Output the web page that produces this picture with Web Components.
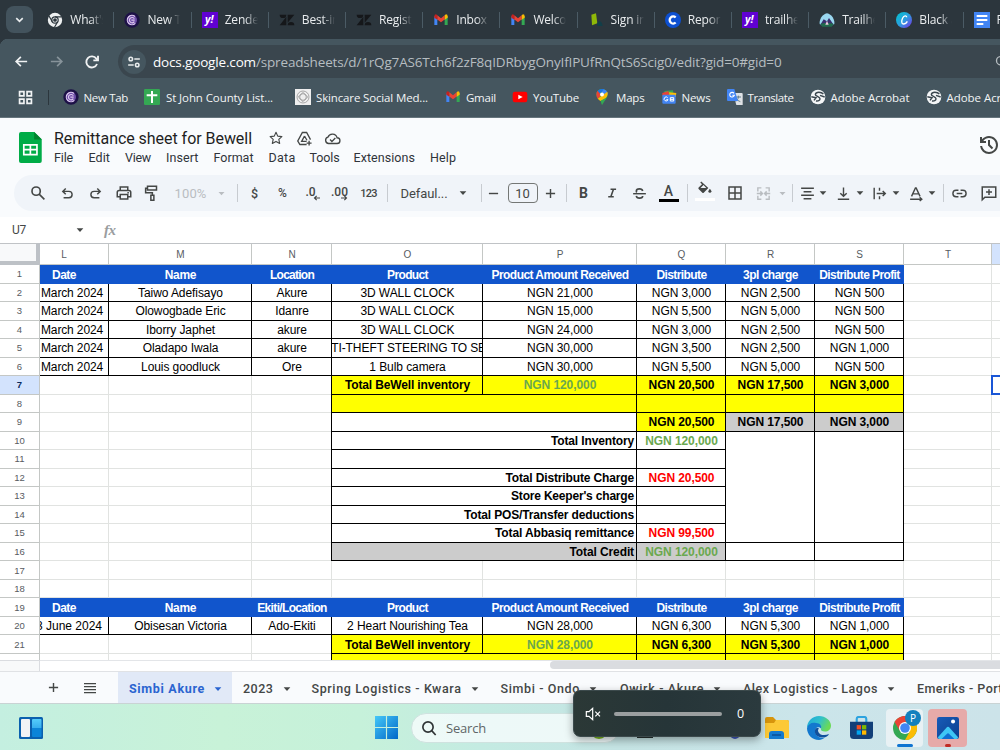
<!DOCTYPE html>
<html lang="en">
<head>
<meta charset="utf-8">
<title>Remittance sheet for Bewell</title>
<style>
    body {
        margin: 0;
        width: 1000px;
        height: 750px;
        overflow: hidden;
        background: #fff;
    }
    desktop-screen {
        font-family: "Open Sans", "Noto Sans", sans-serif;
    }
</style>
</head>
<body>
<desktop-screen>
    <browser-tabs></browser-tabs>
    <address-bar></address-bar>
    <bookmarks-bar></bookmarks-bar>
    <doc-header></doc-header>
    <sheet-toolbar></sheet-toolbar>
    <formula-bar></formula-bar>
    <sheet-grid></sheet-grid>
    <sheet-tabs></sheet-tabs>
    <task-bar></task-bar>
    <volume-flyout slot="overlay"></volume-flyout>
</desktop-screen>

<script>
const line = (body, width = 2) => `<g fill="none" stroke="currentColor" stroke-width="${width}">${body}</g>`;

const C_TAB = `<circle cx="12" cy="12" r="11.5" fill="#1d1147"/><circle cx="12" cy="12" r="7.5" fill="#6f4fa8"/><g fill="none" stroke="#dcc8ee" stroke-width="1.8"><path d="M16.5 6.8A7 7 0 1 0 17 17"/><path d="M15.5 10A4 4 0 1 0 15.5 14.5M11 12.2h5"/></g>`;
const GMAIL = `<path d="M2 6v13.5h4.5V11z" fill="#4285f4"/><path d="M17.5 11v8.500H22V6z" fill="#34a853"/><path d="M2 6.500q0-3 2.500-3L6.500 5v6.500L2 8.500z" fill="#c5221f"/><path d="M6.500 5L12 9.300 17.500 5v6.300L12 15.500 6.500 11.300z" fill="#ea4335"/><path d="M17.500 5l2-1.500Q22 3.500 22 6.500v2l-4.500 3z" fill="#fbbc04"/>`;
const YAHOO = `<path d="M0 0h24v24H0z" fill="#6001d2"/><text x="11" y="16" font-family="Open Sans" font-size="16" font-weight="700" font-style="italic" text-anchor="middle" fill="#fff">y!</text>`;
const ZEN = `<g fill="#15171a"><path d="M1 4h10A5 5 0 0 1 1 4zM11 7v13H1zM13 4h10L13 16zM13 20a5 5 0 0 1 10 0z"/></g>`;
const ACROBAT = `<circle cx="12" cy="12" r="11" fill="#f4f6f7"/><path d="M20 7.500c-3-3.500-11-4-12 .5-.5 3 7 3 7 6.500 0 3-3 4-6 3.500M2 11.500l7 1.500-3 4M15 9.500l7 2.500" fill="none" stroke="#3b474f" stroke-width="2.200"/>`;

const ICONS = {
    down: line('<path d="M6 9.500l6 6 6-6"/>', 3),
    chrome: `<circle cx="12" cy="12" r="10.800" fill="#eef0f1"/><g fill="none" stroke="#2d373e" stroke-width="1.800"><circle cx="12" cy="12" r="4.800"/><path d="M12 7.200h10M8 14.700L3 6M16 14.700l-5 8.500"/></g><circle cx="12" cy="12" r="2.800" fill="#2d373e"/>`,
    ctab: C_TAB,
    yahoo: YAHOO,
    zendesk: ZEN,
    gmail: GMAIL,
    signin: '<path d="M5 4l7-2 2 15-8 3z" fill="#8fb808"/><path d="M14 16c3-4 7-2 8 5h-8z" fill="#123e48"/>',
    report: '<circle cx="12" cy="12" r="12" fill="#0d4fd0"/><path d="M16 8.200A5.300 5.300 0 1 0 16 15.800" fill="none" stroke="#fff" stroke-width="3.500"/>',
    trail: '<path d="M1 18C0 12 5 3 12 2c7 1 12 10 11 16-2 4-20 4-22 0z" fill="#9ad7f0"/><path d="M2 19l5-8 5 3 3-5 7 10c-2 3-18 3-20 0z" fill="#38306e"/><path d="M2 18c5-2 15-2 20 0l-3 4H5z" fill="#206b4c"/><path d="M12 13l2.500 6h-5z" fill="#f0c8e0"/>',
    canva: '<defs><linearGradient id="cv" x1="0" y1="0" x2="1" y2="1"><stop offset="0" stop-color="#00c4cc"/><stop offset=".5" stop-color="#2aa0e0"/><stop offset="1" stop-color="#7d2ae8"/></linearGradient></defs><circle cx="12" cy="12" r="12" fill="url(#cv)"/><path d="M16 8c0-3-4-3-6 1s-2 9 1 9 5-2 6-4" fill="none" stroke="#fff" stroke-width="2"/>',
    docs: '<path d="M0 0h24v24H0z" fill="#4285f4"/><path d="M4 6h16M4 12h16M4 18h10" stroke="#fff" stroke-width="3"/>',
    back: line('<path d="M21 12H4M11 4.500L3.500 12l7.500 7.500"/>', 2.700),
    forward: line('<path d="M3 12h17M13 4.500l7.500 7.500-7.500 7.500"/>', 2.700),
    reload: line('<path d="M19.500 15a8.300 8.300 0 1 1-1-8L20 9"/><path d="M21 2.500V9.500h-7"/>', 2.800),
    tune: line('<circle cx="6.500" cy="7" r="3"/><path d="M12.500 7H22M2 17h9.500"/><circle cx="17.500" cy="17" r="3"/>', 2.700),
    apps: line('<path d="M2.500 2.500h7v7h-7zM14.500 2.500h7v7h-7zM2.500 14.500h7v7h-7zM14.500 14.500h7v7h-7z"/>', 2.700),
    plusdoc: '<rect width="24" height="24" rx="2" fill="#34a853"/><path d="M12 3v18M4 9.500h16" stroke="#fff" stroke-width="3"/>',
    skin: '<path d="M0 0h24v24H0z" fill="#eee"/><g fill="none" stroke="#9b9b9b" stroke-width="1.300"><circle cx="12" cy="12" r="9"/><circle cx="12" cy="12" r="5"/><path d="M5 12l7-7 7 7-7 7z"/></g>',
    youtube: '<rect x="1" y="4" width="22" height="16" rx="3.500" fill="#f00"/><path d="M9.500 8.500v7l6.500-3.500z" fill="#fff"/>',
    maps: '<path d="M12 0c-5 0-8.500 3.700-8.500 8.200C3.500 14.500 12 16 12 24c1-6 8.500-9.500 8.500-15.800C20.500 3.700 17 0 12 0z" fill="#34a853"/><path d="M12 0c5 0 8.500 3.700 8.500 8.200L12 8.500z" fill="#4285f4"/><path d="M5.500 2.800L12 8.500 5.500 14.500C3 11 2.500 6 5.500 2.800z" fill="#ea4335"/><path d="M5.500 14.500L20 4c1.500 5-1 8.500-4 11.500L9.500 18z" fill="#fbbc04"/><path d="M10 17.500l9.500-5L12 24z" fill="#34a853"/><path d="M5.500 2.800Q8 0 12 0l3 .5L9 7z" fill="#1a73e8"/><circle cx="12" cy="8.300" r="3" fill="#fff"/>',
    news: '<path d="M5 3l13-1 1 8H6z" fill="#34a853"/><path d="M2 6l9-3 2 7H2z" fill="#ea4335"/><path d="M12 5l11 1-1 6H13z" fill="#fbbc04"/><rect x="2" y="8.500" width="20" height="13.500" rx="1.500" fill="#4285f4"/><path d="M10 13a3 3 0 1 0 .5 3H8M14 13h5v5h-5zM14 15.500h5" fill="none" stroke="#fff" stroke-width="1.500"/>',
    translate: '<path d="M9 6h13q1.500 0 1.500 1.500V24H14z" fill="#dfe2e5"/><path d="M13 12h8M17 10v2c0 3-2 5-4 7M14 14c1 3 4 4 6 5" stroke="#607d8b" stroke-width="1.500" fill="none"/><path d="M1.500 0H11l5.500 18h-15Q0 18 0 16.500v-15Q0 0 1.500 0z" fill="#4285f4"/><path d="M10.500 6.500a3.500 3.500 0 1 0 .5 3H8" fill="none" stroke="#fff" stroke-width="1.600"/>',
    acrobat: ACROBAT,
    star: line('<path d="M12 3.500l2.600 5.700 6.200.7-4.600 4.200 1.300 6.100-5.500-3.100-5.500 3.100 1.300-6.100L3.200 9.900l6.200-.7z" stroke-linejoin="round"/>', 1.700),
    driveadd: line('<path d="M15 20.500H5.500L2.500 15.500 9 3.500h6l5.500 10M12 8.500l-4 7.500h7M12 8.500l3.500 6M18.500 15v7M15 18.500h7"/>', 1.900),
    cloud: line('<path d="M6.500 19A4.500 4.500 0 0 1 5.500 10.200 6.800 6.800 0 0 1 18.500 11 4 4 0 0 1 18.500 19zM8.500 13.500l2.700 2.700 4.800-4.800"/>', 1.900),
    history: '<path fill="currentColor" d="M12 21q-3.450 0-6.012-2.287T3.050 13H5.100q.35 2.600 2.313 4.300T12 19q2.925 0 4.963-2.037T19 12t-2.037-4.962T12 5q-1.725 0-3.225.8T6.250 8H9v2H3V4h2v2.350q1.275-1.600 3.113-2.475T12 3q1.875 0 3.513.713t2.850 1.924 1.925 2.850T21 12t-.712 3.513-1.925 2.850-2.850 1.925T12 21m2.800-4.800L11 12.400V7h2v4.600l3.200 3.200z"/>',
    search: line('<circle cx="9.500" cy="9.500" r="5.500"/><path d="M13.500 13.500l7 7"/>', 2.200),
    undo: line('<path d="M6.500 18H14a4.500 4.500 0 0 0 0-9H5.500M9.500 4.800L5.300 9l4.200 4.200"/>'),
    redo: line('<path d="M17.500 18H10a4.500 4.500 0 0 1 0-9h8.500M14.500 4.800L18.700 9l-4.200 4.200"/>'),
    print: line('<path d="M7 8.500V4h10v4.500M6.500 17H3v-6q0-2.500 2.500-2.500h13q2.500 0 2.500 2.500v6h-3.500M7 14h10v6H7z"/><path d="M16.500 11.500h2"/>'),
    paint: line('<path d="M6 3h12v5H6zM6 5.500H3.500v6h9V15M10.500 15h4v6.500h-4z"/>'),
    caret: '<path d="M4 8h16l-8 8.500z" fill="currentColor"/>',
    minus: line('<path d="M5.500 12h13"/>'),
    plus: line('<path d="M5.500 12h13M12 5.500v13"/>'),
    arrl: line('<path d="M21 12H5M11 5.500L4.500 12l6.500 6.500"/>', 3.500),
    arrr: line('<path d="M3 12h16M13 5.500l6.500 6.500-6.500 6.500"/>', 3.500),
    italic: line('<path d="M9.500 5.500H19M5.500 18.500H15M14.500 5.500l-4.500 13"/>', 2.700),
    strike: line('<path d="M3 12.300h18" stroke-width="2"/><path d="M16.500 8.500C16 6.300 14.300 5.500 12 5.500S7.500 6.800 7.500 8.700q0 1 .8 1.800M7.500 15.300C7.800 17.700 9.500 18.500 12 18.500s4.500-1.200 4.500-3"/>', 2.300),
    fill: '<path d="M7 2l-1.300 1.300 2.300 2.300-4.500 4.500q-.8.900 0 1.800l5 5q.9.700 1.800 0l6.200-6.200zM6 10.500l4-3.700 3.700 3.700z" fill="currentColor" fill-rule="evenodd"/><path d="M18.500 11.500q-2 2.300-2 3.500a2 2 0 0 0 4 0q0-1.200-2-3.500z" fill="currentColor"/>',
    borders: line('<path d="M4 4h16v16H4zM12 4v16M4 12h16"/>'),
    merge: line('<path d="M9 4H4v5M15 4h5v5M9 20H4v-5M15 20h5v-5M2.500 12H10M7.500 9l3 3-3 3M21.500 12H14M16.500 9l-3 3 3 3"/>'),
    halign: line('<path d="M3 4.500h18M6.500 9.500h11M3 14.500h18M6.500 19.500h11"/>'),
    valign: line('<path d="M4 20h16M12 3.500V16M7.500 11.500l4.500 4.500 4.500-4.500"/>'),
    wrap: line('<path d="M4.500 4v16M12 4v4M12 16v4M8 12h12M16.500 8.300l3.700 3.700-3.700 3.700"/>'),
    rotate: line('<path d="M5 16L10.500 4h1L17 16M7 12.500h8M3 20h16M16.500 17.300l3 2.700-3 2.700"/>'),
    link: line('<path d="M10.500 16.500H7.200a4.500 4.500 0 0 1 0-9h3.300M13.500 7.500h3.300a4.500 4.500 0 0 1 0 9h-3.300M8 12h8"/>'),
    comment: line('<path d="M3 21V4h18v13.500H6.500zM12 7v7.500M8 10.700h8"/>'),
    sheets: '<path d="M4.600 0H15l5.700 5.700V22.500q0 1.500-1.500 1.500H4.600q-1.500 0-1.500-1.500v-21Q3.100 0 4.600 0z" fill="#00ac47"/><path d="M14.800 0l5.900 5.900h-5.900z" fill="#00832d"/><path d="M6.800 10h10.200v7.500H6.800zM6.800 13.700h10.200M11.900 10v7.500" fill="none" stroke="#fff" stroke-width="1.300"/>',
    menu: line('<path d="M3 5.500h18M3 10h18M3 14.500h18M3 19h18"/>'),
    widgets: '<defs><linearGradient id="wg" x1="0" y1="0" x2="0" y2="1"><stop offset="0" stop-color="#55cdfb"/><stop offset=".5" stop-color="#36aeee"/><stop offset=".51" stop-color="#0b84d8"/></linearGradient></defs><rect y="1" width="24" height="22" rx="1.500" fill="#0a60ae"/><rect x="2" y="3" width="9" height="18" rx="1" fill="#f1f3f5"/><rect x="13" y="3" width="9.500" height="18" rx="1" fill="url(#wg)"/>',
    windows: '<defs><linearGradient id="wn" x1="0" y1="0" x2="1" y2="1"><stop offset="0" stop-color="#45c8f8"/><stop offset="1" stop-color="#0067c8"/></linearGradient></defs><path d="M0 0h11.400v11.400H0zM12.600 0H24v11.400H12.600zM0 12.600h11.400V24H0zM12.600 12.600H24V24H12.600z" fill="url(#wn)"/>',
    find: line('<circle cx="10.500" cy="10.500" r="7.700"/><path d="M16 16l6 6.500"/>', 2.500),
    folder: '<path d="M0 3q0-2 2-2h6l3 3h11q2 0 2 2v5H0z" fill="#d7950d"/><path d="M0 7h9l2-3h11q2 0 2 2v16H0z" fill="#fcc937"/><path d="M4 23v-5q0-3 3-3h9q3 0 3 3v5z" fill="#137bd0"/><path d="M7 18h9v2H7z" fill="#0b5aa5"/>',
    edge: '<defs><linearGradient id="eg" x1="0" y1="0" x2="1" y2=".4"><stop offset="0" stop-color="#1da7d9"/><stop offset=".55" stop-color="#31c0cc"/><stop offset="1" stop-color="#6ada57"/></linearGradient></defs><path d="M0 12C0 5 5.500 0 12 0s12 4.500 12 9.500c0 4-3 6-6 6s-4.500-1-4-2.500 0-5-5-5S1 10 0 12z" fill="url(#eg)"/><path d="M0 12c1-4 5-6 9-5 4 0 6 3 5 5.500C12 10 8 11 8 15c0 5 6 8 10 6.500-2 1.500-4 2.500-6 2.500C5 24 0 18.500 0 12z" fill="#1378ce"/><path d="M8.500 12.500C6 18 11 22 16 21.500c3 0 5-1.500 6-3.500-4 2-10 1.500-11-3 0-1 .3-2 1-2.500-1.500-.8-3-.5-3.500 0z" fill="#11509c"/>',
    store: '<path d="M7 7V3q0-2 2-2h6q2 0 2 2v4" fill="none" stroke="#2da3df" stroke-width="2.200"/><path d="M0 6h24v14q0 4-4 4H4q-4 0-4-4z" fill="#123f78"/><path d="M7 9.500h4.500V14H7z" fill="#f25022"/><path d="M12.500 9.500H17V14h-4.500z" fill="#7fba00"/><path d="M7 15h4.500v4.500H7z" fill="#00a4ef"/><path d="M12.500 15H17v4.500h-4.500z" fill="#ffb900"/>',
    chromec: '<circle cx="12" cy="12" r="12" fill="#34a853"/><path d="M12 0c4.500 0 8.500 2.500 10.400 6H12L7 15 1.600 6C3.700 2.400 7.500 0 12 0z" fill="#ea4335"/><path d="M22.400 6A12 12 0 0 1 12 24l5-9V6z" fill="#fbbc04"/><circle cx="12" cy="12" r="6" fill="#fff"/><circle cx="12" cy="12" r="4.800" fill="#4285f4"/>',
    photos: '<defs><linearGradient id="ph" x1="0" y1="0" x2="1" y2="1"><stop offset="0" stop-color="#185bb8"/><stop offset="1" stop-color="#0b3f8e"/></linearGradient></defs><rect width="24" height="24" rx="2.500" fill="url(#ph)"/><path d="M1 22l10-11q1-1 2 0l10 11q-.5 2-2 2H3q-1.500 0-2-2z" fill="#3ec6f5"/><path d="M5 24l6.300-6q.7-.6 1.400 0l6.300 6z" fill="#0f6fd2"/><circle cx="17.500" cy="5" r="2.200" fill="#fff"/>',
    mute: line('<path d="M2 8.500h4L11.500 3.500v17L6 15.500H2z"/><path d="M15.500 8.500l7 7M22.500 8.500l-7 7"/>', 1.800)
};

class BaseElement extends HTMLElement {
    constructor() {
        super();
        this.attachShadow({ mode: "open" });
    }

    connectedCallback() {
        this.render();
    }

    paint(css, html) {
        this.shadowRoot.innerHTML = `<style>:host, * { box-sizing: border-box; } ${css}</style>${html}`;
    }
}

class DesktopScreen extends BaseElement {
    render() {
        this.paint(`
            :host { display: block; position: relative; width: 1000px; height: 750px; overflow: hidden; }
            .stack { display: flex; flex-direction: column; }`,
            `<div class="stack"><slot></slot></div><slot name="overlay"></slot>`);
    }
}

class XIcon extends BaseElement {
    render() {
        const size = this.getAttribute("size") || 16;
        this.paint(`:host { display: block; flex: none; width: ${size}px; height: ${size}px; } svg { display: block; }`,
            `<svg width="${size}" height="${size}" viewBox="0 0 24 24">${ICONS[this.getAttribute("name")]}</svg>`);
    }
}

// one-line label, tracked in or out until it is w pixels wide
class FitText extends BaseElement {
    render() {
        this.paint(`:host { display: inline-block; flex: none; white-space: nowrap; }`, `<slot></slot>`);
        const width = Number(this.getAttribute("w"));
        if (width) {
            this.style.letterSpacing = "0";
            const natural = this.getBoundingClientRect().width;
            this.style.letterSpacing = (width - natural) / this.textContent.length + "px";
        }
    }
}

class BrowserTabs extends BaseElement {
    render() {
        const tabs = [
            ["chrome", "What's n"], ["ctab", "New Ta"], ["yahoo", "Zendes"], ["zendesk", "Best-in-"],
            ["zendesk", "Registe"], ["gmail", "Inbox ("], ["gmail", "Welcon"], ["signin", "Sign in t"],
            ["report", "Report"], ["yahoo", "trailhe"], ["trail", "Trailhe"], ["canva", "Black a"], ["docs", "Resu"]
        ];
        this.paint(`
            :host { display: flex; align-items: center; height: 39px; background: #2c363d; color: #e9ecee; font-size: 12px; overflow: hidden; }
            .pick { flex: none; width: 27px; height: 27px; margin: 0 4.300px 0 6px; border-radius: 8px; background: #43535d; display: grid; place-items: center; }
            .tab { flex: none; display: flex; align-items: center; width: 77.200px; height: 16px; padding-left: 10px; border-right: 1px solid #4b5b65; }
            .name { width: 34px; margin-left: 7px; overflow: hidden; white-space: nowrap; -webkit-mask: linear-gradient(90deg, #000 60%, transparent 97%); mask: linear-gradient(90deg, #000 60%, transparent 97%); letter-spacing: -0.200px; }`,
            `<div class="pick"><x-icon name="down" size="13"></x-icon></div>` +
            tabs.map(([icon, name]) => `<div class="tab"><x-icon name="${icon}" size="16"></x-icon><div class="name">${name}</div></div>`).join(""));
    }
}

class AddressBar extends BaseElement {
    render() {
        this.paint(`
            :host { display: flex; align-items: center; height: 45px; color: #f0f2f3; background: radial-gradient(circle at 8px 8px, #45565f 8px, #2c363d 8.500px) 0 0 / 8px 8px no-repeat, linear-gradient(#45565f, #45565f) 8px 0 no-repeat, linear-gradient(#45565f, #45565f) 0 8px no-repeat; }
            .nav { display: flex; gap: 20px; padding-left: 14px; }
            .fwd { color: #87939a; }
            .omni { flex: 1; display: flex; align-items: center; height: 33px; margin-left: 18px; padding-left: 4px; background: #3a464e; border-radius: 17px 0 0 17px; font-size: 13.500px; color: #b6bdc1; }
            .site { width: 24px; height: 24px; border-radius: 50%; background: #45565f; display: grid; place-items: center; color: #e8ebec; margin-right: 7px; }
            b { font-weight: 400; color: #fff; }
            .end { margin-left: 214px; color: #b6bdc1; }`,
            `<div class="nav"><x-icon name="back" size="15"></x-icon><x-icon class="fwd" name="forward" size="15"></x-icon><x-icon name="reload" size="16"></x-icon></div>
            <div class="omni"><div class="site"><x-icon name="tune" size="14"></x-icon></div><fit-text w="628.5"><b>docs.google.com</b>/spreadsheets/d/1rQg7AS6Tch6f2zF8qIDRbygOnyIfIPUfRnQtS6Scig0/edit?gid=0#gid=0</fit-text><x-icon class="end" name="find" size="13"></x-icon></div>`);
    }
}

class BookmarksBar extends BaseElement {
    render() {
        // gap before the icon, icon, gap after it, label, label width
        const marks = [
            [14, "ctab", 5, "New Tab", 44.500], [16, "plusdoc", 6, "St John County List...", 107],
            [22, "skin", 5, "Skincare Social Med...", 112], [17, "gmail", 5, "Gmail", 30],
            [16, "youtube", 5, "YouTube", 46], [15, "maps", 6, "Maps", 28.500],
            [16, "news", 5, "News", 29], [16, "translate", 5, "Translate", 46],
            [16, "acrobat", 5, "Adobe Acrobat", 79], [16, "acrobat", 5, "Adobe Acrobat", 79]
        ];
        this.paint(`
            :host { display: flex; align-items: center; height: 34px; padding: 0 0 7px 18px; background: #45565f; color: #f2f4f5; font-size: 11.500px; overflow: hidden; border-bottom: 1px solid #66757d; }
            i { flex: none; width: 1px; height: 15px; margin-left: 14.500px; background: #2c363d; }`,
            `<x-icon name="apps" size="15"></x-icon><i></i>` +
            marks.map(([gap, icon, pad, name, w]) => `<x-icon style="margin-left:${gap}px" name="${icon}" size="16"></x-icon><fit-text style="margin-left:${pad}px" w="${w}">${name}</fit-text>`).join(""));
    }
}

class DocHeader extends BaseElement {
    render() {
        const menus = [["File", 19, 0], ["Edit", 21.500, 15.500], ["View", 26, 15], ["Insert", 32.500, 15], ["Format", 40, 15], ["Data", 27, 15], ["Tools", 30, 14], ["Extensions", 61.500, 14], ["Help", 26, 15]];
        this.paint(`
            :host { display: flex; height: 57px; padding: 12px 0 0 15px; background: #f9fbfd; color: #444746; font-family: Roboto, "Liberation Sans", sans-serif; }
            .text { margin-left: 8px; }
            .logo { margin-top: 2px; }
            .title { display: flex; align-items: center; height: 16px; font-size: 16px; color: #1f1f1f; }
            .title x-icon { color: #444746; }
            .menu { display: flex; height: 15px; line-height: 15px; margin-top: 4px; font-size: 12.500px; color: #30343a; }
            .clock { margin: 3px -1px 0 auto; }`,
            `<x-icon class="logo" name="sheets" size="31"></x-icon>
            <div class="text">
                <div class="title"><fit-text w="198">Remittance sheet for Bewell</fit-text><x-icon name="star" size="16" style="margin-left:16px"></x-icon><x-icon name="driveadd" size="17" style="margin-left:12px"></x-icon><x-icon name="cloud" size="17" style="margin-left:11px"></x-icon></div>
                <div class="menu">${menus.map(([name, w, gap]) => `<fit-text w="${w}" style="margin-left:${gap}px">${name}</fit-text>`).join("")}</div>
            </div>
            <x-icon class="clock" name="history" size="24"></x-icon>`);
    }
}

class ToolItem extends BaseElement {
    render() {
        const icon = this.getAttribute("icon");
        const size = this.getAttribute("size") || 17;
        this.paint(`
            :host { flex: none; display: flex; align-items: center; justify-content: center; width: ${this.getAttribute("w") || 20}px; height: 22px; margin-left: ${this.getAttribute("gap") || 0}px; }
            :host([off]) { color: #b9bdc1; }
            :host([sep]) { width: 1px; height: 18px; background: #c7cbd0; }`,
            icon ? `<x-icon name="${icon}" size="${size}"></x-icon>` : `<slot></slot>`);
    }
}

class SheetToolbar extends BaseElement {
    render() {
        this.paint(`
            :host { display: block; height: 42px; padding-left: 14px; background: #f9fbfd; color: #444746; font-family: Roboto, "Liberation Sans", sans-serif; font-size: 13px; overflow: hidden; }
            .pill { display: flex; align-items: center; height: 36px; background: #f0f4f9; border-radius: 18px 0 0 18px; }
            .num { display: grid; font-size: 12px; line-height: 12px; font-weight: 500; justify-items: end; margin-top: 2px; }
            .num x-icon { margin: -4px -5px 0 0; }
            .box { border: 1px solid #747775; border-radius: 4px; width: 30px; height: 20px; display: grid; place-items: center; }
            .a, .f { display: grid; justify-items: center; width: 20px; height: 18px; line-height: 15px; font-size: 14px; font-weight: 500; border-bottom: 3px solid #000; }
            .f { border-color: #fff; margin-top: -2px; }`,
            `<div class="pill">
                <tool-item gap="13.5" icon="search" size="18"></tool-item>
                <tool-item gap="10" icon="undo"></tool-item>
                <tool-item gap="8" icon="redo"></tool-item>
                <tool-item gap="8.5" icon="print" size="18"></tool-item>
                <tool-item gap="7.5" icon="paint" size="18"></tool-item>
                <tool-item gap="13" w="32" off><fit-text w="32">100%</fit-text></tool-item>
                <tool-item gap="10" w="10" icon="caret" size="9" off></tool-item>
                <tool-item gap="10" sep></tool-item>
                <tool-item gap="7"><b style="font-weight:500;font-size:12.500px">$</b></tool-item>
                <tool-item gap="8"><b style="font-weight:500;font-size:12px">%</b></tool-item>
                <tool-item gap="8"><div class="num">.0<x-icon name="arrl" size="8"></x-icon></div></tool-item>
                <tool-item gap="9"><div class="num">.00<x-icon name="arrr" size="8" style="margin-right:0"></x-icon></div></tool-item>
                <tool-item gap="9"><fit-text w="16.5" style="font-size:11px;font-weight:500">123</fit-text></tool-item>
                <tool-item gap="8" sep></tool-item>
                <tool-item gap="13" w="47"><fit-text w="47">Defaul...</fit-text></tool-item>
                <tool-item gap="10" w="10" icon="caret" size="10"></tool-item>
                <tool-item gap="13" sep></tool-item>
                <tool-item gap="2" icon="minus"></tool-item>
                <tool-item gap="4" w="30"><div class="box">10</div></tool-item>
                <tool-item gap="3" icon="plus"></tool-item>
                <tool-item gap="5" sep></tool-item>
                <tool-item gap="7"><b style="font-size:14px">B</b></tool-item>
                <tool-item gap="8" icon="italic" size="14"></tool-item>
                <tool-item gap="8" icon="strike"></tool-item>
                <tool-item gap="9"><div class="a">A</div></tool-item>
                <tool-item gap="8" sep></tool-item>
                <tool-item gap="7"><div class="f"><x-icon name="fill" size="18" style="margin-top:-3px"></x-icon></div></tool-item>
                <tool-item gap="10" icon="borders" size="18"></tool-item>
                <tool-item gap="9" icon="merge" off></tool-item>
                <tool-item gap="4" w="10" icon="caret" size="9" off></tool-item>
                <tool-item gap="4" sep></tool-item>
                <tool-item gap="5" icon="halign"></tool-item>
                <tool-item w="10" icon="caret" size="10"></tool-item>
                <tool-item gap="6" icon="valign"></tool-item>
                <tool-item gap="1" w="10" icon="caret" size="10"></tool-item>
                <tool-item gap="5" icon="wrap"></tool-item>
                <tool-item gap="1" w="10" icon="caret" size="10"></tool-item>
                <tool-item gap="6" icon="rotate"></tool-item>
                <tool-item w="10" icon="caret" size="10"></tool-item>
                <tool-item gap="6" sep></tool-item>
                <tool-item gap="6" icon="link"></tool-item>
                <tool-item gap="9" icon="comment" size="18"></tool-item>
            </div>`);
    }
}

class FormulaBar extends BaseElement {
    render() {
        this.paint(`
            :host { display: flex; align-items: center; height: 26px; padding-left: 12px; background: #fff; color: #444746; font: 12px Roboto, "Liberation Sans", sans-serif; }
            x-icon { margin-left: 49px; }
            i { margin-left: 19px; font: italic 700 15px "Liberation Serif", serif; color: #9a9da0; letter-spacing: -0.500px; }`,
            `<fit-text w="14">U7</fit-text><x-icon name="caret" size="10"></x-icon><i>fx</i>`);
    }
}

class SheetCell extends BaseElement {
    render() {
        const [col, row, cols, rows] = this.getAttribute("at").split(" ");
        this.style.gridArea = `${row} / ${col} / span ${rows || 1} / span ${cols || 1}`;
        this.paint(`
            :host { display: flex; align-items: center; justify-content: center; overflow: hidden; white-space: nowrap; min-width: 0; border: solid #e1e3e1; border-width: 0 1px 1px 0; background: #fff; color: #000; padding: 1px 0 0 1px; }
            :host([kind~="lined"]) { border: 1px solid #000; margin: -1px 0 0 -1px; }
            :host([kind~="top"]) { border-top: 0; margin-top: 0; }
            :host([kind~="cut"]) { border-left: 0; margin-left: 0; }
            :host([kind~="bold"]), :host([kind~="title"]) { font-weight: 700; }
            :host([kind~="title"]) { border: 0; background: #1155cc; color: #fff; }
            :host([kind~="yellow"]) { background: #ff0; }
            :host([kind~="grey"]) { background: #ccc; }
            :host([kind~="green"]) { color: #6aa84f; }
            :host([kind~="red"]) { color: #f00; }
            :host([kind~="right"]) { justify-content: flex-end; padding-right: 2px; }
            :host([kind~="picked"]) { border: 2px solid #1a56d6; margin: -1px 0 0 -1px; }`,
            `<slot></slot>`);
    }
}

class SheetGrid extends BaseElement {
    render() {
        const cells = [];
        const add = (col, row, kind = "", text = "", cols = 1, rows = 1, style = "") =>
            cells.push(`<sheet-cell at="${col} ${row} ${cols} ${rows}" kind="${kind}" style="${style}">${text}</sheet-cell>`);
        const ngn = (n) => n ? "NGN " + n : "";

        const titles = (row, place) => {
            const names = [["Date", 24], ["Name", 31.500], [place, place.length > 8 ? 69.500 : 44], ["Product", 41], ["Product Amount Received", 137], ["Distribute", 50], ["3pl charge", 55], ["Distribute Profit", 80.500]];
            names.forEach(([name, w], i) => add(i + 1, row, "title", `<fit-text w="${w}">${name}</fit-text>`, 1, 1, i ? "padding-right:1px" : "padding-right:22px"));
        };
        const order = (row, values, kind) => values.forEach((v, i) =>
            add(i + 1, row, "lined " + kind + (i ? "" : " cut"), v, 1, 1, i ? "" : "padding-right:5px"));

        // plain gridlines under everything
        for (let row = 1; row <= 22; row++) {
            for (let col = 1; col <= 10; col++) add(col, row);
        }
        titles(1, "Location");
        const mar = '<fit-text w="62">March 2024</fit-text>';
        order(2, [mar, "Taiwo Adefisayo", "Akure", "3D WALL CLOCK", "NGN 21,000", "NGN 3,000", "NGN 2,500", "NGN 500"], "top");
        order(3, [mar, "Olowogbade Eric", "Idanre", "3D WALL CLOCK", "NGN 15,000", "NGN 5,500", "NGN 5,000", "NGN 500"], "");
        order(4, [mar, "Iborry Japhet", "akure", "3D WALL CLOCK", "NGN 24,000", "NGN 3,000", "NGN 2,500", "NGN 500"], "");
        order(5, [mar, "Oladapo Iwala", "akure", "ANTI-THEFT STEERING TO SEAT", "NGN 30,000", "NGN 3,500", "NGN 2,500", "NGN 1,000"], "");
        order(6, [mar, "Louis goodluck", "Ore", "1 Bulb camera", "NGN 30,000", "NGN 5,500", "NGN 5,000", "NGN 500"], "");

        const totals = (row, sum, rest) => {
            add(4, row, "lined bold yellow", '<fit-text w="125">Total BeWell inventory</fit-text>');
            add(5, row, "lined bold yellow green", ngn(sum));
            rest.forEach((n, i) => add(6 + i, row, "lined bold yellow", ngn(n)));
            add(4, row + 1, "lined yellow", "", 2);
            [6, 7, 8].forEach((col) => add(col, row + 1, "lined yellow"));
        };
        totals(7, "120,000", ["20,500", "17,500", "3,000"]);

        add(4, 9, "lined", "", 2);
        add(6, 9, "lined bold yellow", "NGN 20,500");
        add(7, 9, "lined bold grey", "NGN 17,500");
        add(8, 9, "lined bold grey", "NGN 3,000");
        [["Total Inventory", 83, "120,000", "green"], ["", 0, "", ""], ["Total Distribute Charge", 128.500, "20,500", "red"], ["Store Keeper's charge", 123, "", ""],
            ["Total POS/Transfer deductions", 170, "", ""], ["Total Abbasiq remittance", 139, "99,500", "red"], ["Total Credit", 64.500, "120,000", "green"]
        ].forEach(([name, w, sum, tone], i) => {
            const grey = i === 6 ? " grey" : "";
            add(4, 10 + i, "lined bold right" + grey, name && `<fit-text w="${w}">${name}</fit-text>`, 2);
            add(6, 10 + i, "lined bold " + tone + grey, ngn(sum));
        });
        add(7, 10, "lined", "", 1, 6);
        add(8, 10, "lined", "", 1, 6);
        add(7, 16, "lined");
        add(8, 16, "lined");

        titles(19, "Ekiti/Location");
        order(20, ['<fit-text w="66" style="margin-right:6px">3 June 2024</fit-text>', "Obisesan Victoria", "Ado-Ekiti", "2 Heart Nourishing Tea", "NGN 28,000", "NGN 6,300", "NGN 5,300", "NGN 1,000"], "top");
        totals(21, "28,000", ["6,300", "5,300", "1,000"]);
        add(10, 7, "picked");

        const letters = "LMNOPQRSTU".split("");
        const heads = letters.map((c, i) => `<div class="head${c === "U" ? " on" : ""}"${i ? "" : ' style="padding-right:21px"'}>${c === "U" ? "" : c}</div>`).join("");
        const nums = Array.from({ length: 22 }, (_, i) => `<div class="num${i === 6 ? " on" : ""}">${i < 21 ? i + 1 : ""}</div>`).join("");

        this.paint(`
            :host { display: grid; grid-template: 22px 395px 11px / 40px 960px; height: 428px; overflow: hidden; font: 12px "Liberation Sans", Arial, sans-serif; background: #fff; }
            .corner { background: #f8f9fa; border: solid #bdc1c6; border-width: 1px 4px 4px 0; border-top-color: #c0c3c6; }
            .cols, .cells { display: grid; grid-template-columns: 69px 143px 80px 151px 154px 89px 89px 89px 88px 60px; overflow: hidden; }
            .cols { border-top: 1px solid #c0c3c6; color: #575b5f; font-size: 10px; }
            .head { display: grid; place-items: center; border: solid #c4c7c5; border-width: 0 1px 1px 0; padding: 1px 0 0 1px; }
            .nums, .cells { display: grid; grid-auto-rows: 18.530px; overflow: hidden; }
            .cells { grid-template-rows: repeat(22, 18.530px); letter-spacing: -0.080px; }
            .num { display: grid; place-items: center; border: solid #c4c7c5; border-width: 0 1px 1px 0; color: #575b5f; font-size: 9.500px; background: #fff; }
            .on { background: #d3e3fd; color: #0b2a5c; font-weight: 700; }
            .foot { background: #f8f9fa; border: solid #dadce0; border-width: 1px 1px 0 0; }
            .scroll { border-top: 1px solid #e3e5e8; }
            .thumb { height: 8px; margin-left: 510px; background: #dadce0; border-radius: 4px 0 0 4px; }`,
            `<div class="corner"></div><div class="cols">${heads}</div>
            <div class="nums">${nums}</div><div class="cells">${cells.join("")}</div>
            <div class="foot"></div><div class="scroll"><div class="thumb"></div></div>`);
    }
}

class SheetTabs extends BaseElement {
    render() {
        const tabs = [["Simbi Akure", 76, 9], ["2023", 30.500, 9], ["Spring Logistics - Kwara", 150, 10], ["Simbi - Ondo", 79.500, 11], ["Qwirk - Akure", 84, 10], ["Alex Logistics - Lagos", 135, 10], ["Emeriks - Port", 86, 10]];
        this.paint(`
            :host { display: flex; align-items: center; height: 32px; background: #f9fbfd; border-top: 1px solid #e0e2e5; color: #444746; font: 500 12.500px Roboto, "Liberation Sans", sans-serif; padding-left: 45px; overflow: hidden; }
            .menu { margin: 0 20px 0 20px; }
            .tab { flex: none; display: flex; align-items: center; height: 32px; padding: 2px 0 0 11px; }
            .tab x-icon { margin-left: 8px; }
            .on { background: #e1e9f7; color: #2a64d0; font-weight: 700; }`,
            `<x-icon name="plus" size="17"></x-icon><x-icon class="menu" name="menu" size="16"></x-icon>` +
            tabs.map(([name, w, end], i) => `<div class="tab${i ? "" : " on"}" style="padding-right:${end}px"><fit-text w="${w}">${name}</fit-text><x-icon name="caret" size="10"></x-icon></div>`).join(""));
    }
}

class TaskBar extends BaseElement {
    render() {
        this.paint(`
            :host { display: flex; align-items: center; height: 47px; padding: 1px 0 0 19px; border-top: 1px solid #c9d3d4; background: linear-gradient(90deg, #c4efe0 0, #c8f2d8 22%, #c6f1da 36%, #c4ebe2 48%, #c5e4e4 62%, #cbe5ea 80%, #cce3e9 100%); }
            .win { margin-left: 332px; }
            .search { display: flex; align-items: center; width: 209px; height: 30px; margin-left: 13px; padding-left: 9px; border-radius: 15px; background: rgba(245, 252, 251, 0.850); border: 1px solid #cfe2df; color: #5f6667; font-size: 13px; }
            .search x-icon { color: #2f3435; margin-right: 9px; }
            .gem { width: 18px; height: 18px; border-radius: 50%; background: #79b51c; margin: 4px 0 0 104px; }
            .dash { width: 16px; height: 3px; margin: 18px 0 0 17px; background: #26302f; }
            .dot { width: 10px; height: 10px; margin: 12px 0 0 77px; border-radius: 50%; background: #3c55ba; }
            .app { position: relative; display: grid; place-items: center; width: 37px; height: 38px; margin-left: 13px; border-radius: 4px; background: #e8f1f4; }
            .app::after { content: ""; position: absolute; bottom: 0; width: 16px; height: 3px; border-radius: 2px; background: #0f74d1; }
            .photo { width: 39px; margin-left: 5px; background: #e6aaa9; }
            .photo::after { width: 6px; background: #c02b24; }
            .badge { position: absolute; left: 19px; top: 1px; width: 16px; height: 16px; border-radius: 50%; background: #1280be; color: #fff; font: 10px/16px "Open Sans", sans-serif; text-align: center; }`,
            `<x-icon name="widgets" size="24"></x-icon>
            <x-icon class="win" name="windows" size="23"></x-icon>
            <div class="search"><x-icon name="find" size="16"></x-icon><fit-text w="40">Search</fit-text><div class="gem"></div></div>
            <div class="dash"></div><div class="dot"></div>
            <x-icon name="folder" size="24" style="margin-left:25px"></x-icon>
            <x-icon name="edge" size="24" style="margin-left:18px"></x-icon>
            <x-icon name="store" size="23" style="margin-left:19px"></x-icon>
            <div class="app"><x-icon name="chromec" size="24"></x-icon><div class="badge">P</div></div>
            <div class="app photo"><x-icon name="photos" size="22"></x-icon></div>`);
    }
}

class VolumeFlyout extends BaseElement {
    render() {
        this.paint(`
            :host { position: absolute; left: 573px; top: 690px; width: 188px; height: 47px; display: flex; align-items: center; padding-left: 11px; border-radius: 7px; background: linear-gradient(90deg, #2b3836, #263538 50%, #2b3a3e); border: 1px solid #3c4a4c; box-shadow: 0 3px 8px rgba(0, 0, 0, 0.350); color: #fff; font-size: 12.500px; }
            .track { width: 108px; height: 4px; margin: 0 15px 0 13px; border-radius: 2px; background: #9b9fa0; }`,
            `<x-icon name="mute" size="16"></x-icon><div class="track"></div><span>0</span>`);
    }
}

customElements.define("desktop-screen", DesktopScreen);
customElements.define("browser-tabs", BrowserTabs);
customElements.define("address-bar", AddressBar);
customElements.define("bookmarks-bar", BookmarksBar);
customElements.define("doc-header", DocHeader);
customElements.define("sheet-toolbar", SheetToolbar);
customElements.define("tool-item", ToolItem);
customElements.define("formula-bar", FormulaBar);
customElements.define("sheet-grid", SheetGrid);
customElements.define("sheet-cell", SheetCell);
customElements.define("sheet-tabs", SheetTabs);
customElements.define("task-bar", TaskBar);
customElements.define("volume-flyout", VolumeFlyout);
customElements.define("x-icon", XIcon);
// last, so that every label is measured in its final font
customElements.define("fit-text", FitText);
</script>
</body>
</html>
